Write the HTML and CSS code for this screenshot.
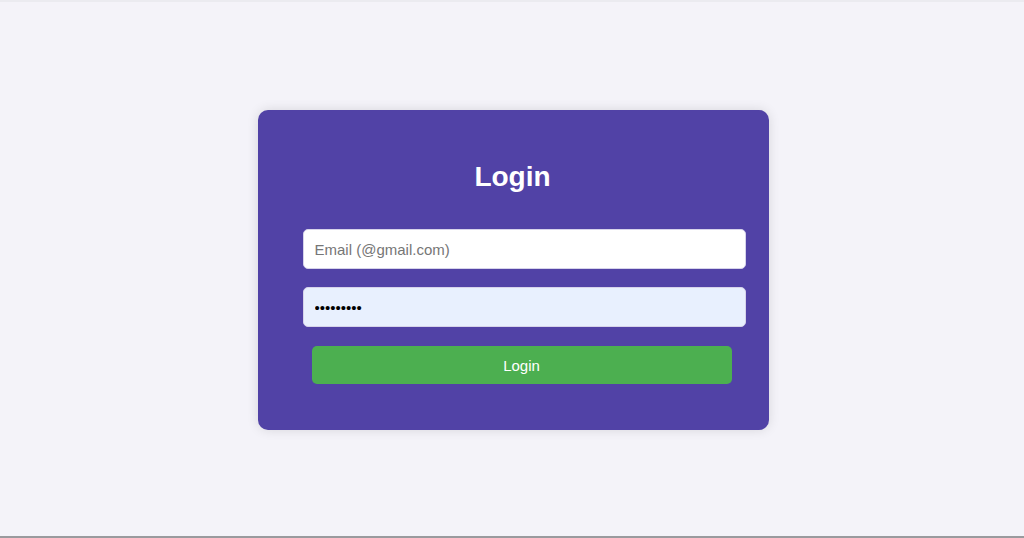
FILE: index.html
```html
<!DOCTYPE html>
<html lang="en">
<head>
    <meta charset="UTF-8">
    <meta name="viewport" content="width=device-width, initial-scale=1.0">
    <title>Login</title>
    <link rel="stylesheet" href="styles.css">
</head>
<body>
    <form class="login-card" onsubmit="return false">
        <h2 class="login-title">Login</h2>
        <input class="login-input" type="email" placeholder="Email (@gmail.com)">
        <input class="login-input login-input-filled" type="password" value="123456789">
        <button class="login-button" type="submit">Login</button>
    </form>
</body>
</html>
```

FILE: styles.css
```css
html, body {
    margin: 0;
    padding: 0;
}

body {
    font-family: "Liberation Sans", Arial, sans-serif;
    background-color: #f4f3f9;
    height: 538px;
    box-sizing: border-box;
    border-top: 2px solid #ebebf0;
    border-bottom: 2px solid #9a9a9e;
    display: flex;
    align-items: center;
    justify-content: center;
}

.login-card {
    width: 511px;
    box-sizing: border-box;
    padding: 51px 46px 46px 45px;
    margin: 2px 0 0 2px;
    background-color: #5142a6;
    border-radius: 10px;
    box-shadow: 0 0 12px rgba(0, 0, 0, 0.12);
    display: flex;
    flex-direction: column;
}

.login-title {
    margin: 0 0 36px;
    font-size: 28px;
    line-height: 32px;
    font-weight: bold;
    text-align: center;
    color: #fff;
}

.login-input {
    width: 443px;
    height: 40px;
    box-sizing: border-box;
    margin: 0 0 18px;
    padding: 0 11px;
    border: 1px solid #d6d3ea;
    border-radius: 5px;
    background-color: #fff;
    font-family: "Liberation Sans", Arial, sans-serif;
    font-size: 15px;
    color: #000;
    outline: none;
}

.login-input::placeholder {
    color: #767676;
}

.login-input-filled {
    background-color: #e8f0fe;
    margin-bottom: 19px;
}

.login-button {
    align-self: flex-start;
    width: 420px;
    height: 38px;
    margin-left: 9px;
    border: none;
    border-radius: 5px;
    background-color: #4caf50;
    color: #fff;
    font-family: "Liberation Sans", Arial, sans-serif;
    font-size: 15px;
    cursor: pointer;
}
```
